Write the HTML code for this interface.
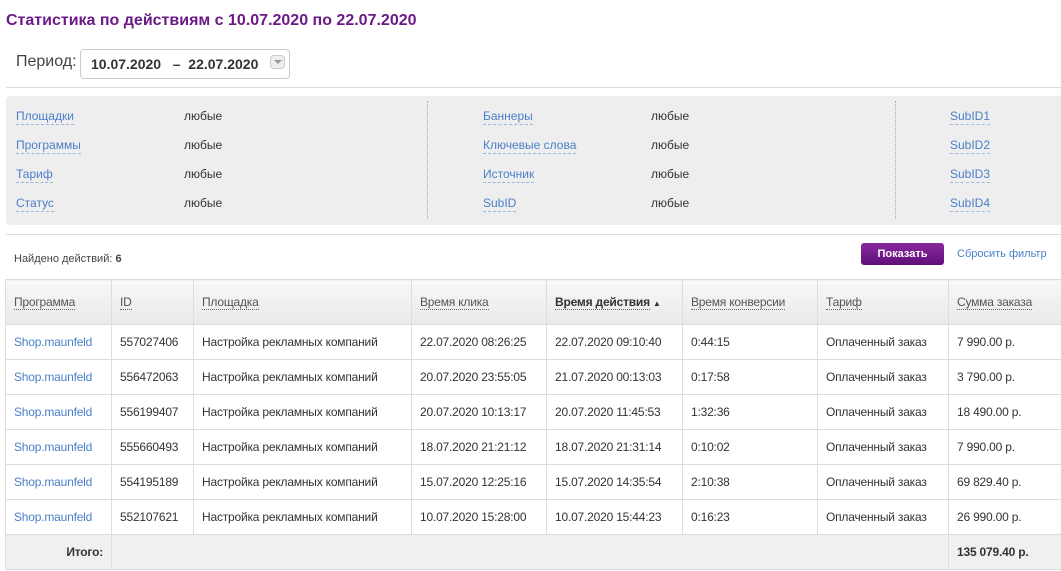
<!DOCTYPE html>
<html><head><meta charset="utf-8"><style>
*{margin:0;padding:0;box-sizing:border-box}
body{width:1061px;height:571px;overflow:hidden;background:#fff;font-family:"Liberation Sans",sans-serif;font-size:12px;color:#333;position:relative}
.a{position:absolute;white-space:nowrap}
.lk{color:#4a7fc8;border-bottom:1px dashed #9bb8e0;line-height:15px}
.v{color:#333}
table{position:absolute;left:5px;top:279px;width:1060px;border-collapse:collapse;table-layout:fixed}
td,th{border:1px solid #ddd;padding:0 8px;height:35px;text-align:left;white-space:nowrap;overflow:hidden;font-weight:normal;font-size:12px;letter-spacing:-0.2px}
th{height:45px;background:linear-gradient(#f8f8f8,#e9e9e9);color:#555}
th span{border-bottom:1px dotted #666}
td a{color:#4a7fc8;text-decoration:none}
tr.t td{background:#f0f0f0;font-weight:bold}
</style></head><body>
<div class="a" style="left:6px;top:12px;font-size:16px;font-weight:bold;color:#6c1a86">Статистика по действиям с 10.07.2020 по 22.07.2020</div>
<div class="a" style="left:16px;top:53px;font-size:16px;color:#444">Период:</div>
<div class="a" style="left:80px;top:49px;width:210px;height:30px;border:1px solid #ccc;border-radius:4px"></div>
<div class="a" style="left:91px;top:56px;font-size:14px;font-weight:bold;color:#333">10.07.2020 &nbsp;&nbsp;– &nbsp;22.07.2020</div>
<div class="a" style="left:270px;top:55px;width:15px;height:14px;border:1px solid #ccc;border-radius:4px;background:#eee"></div>
<div class="a" style="left:274px;top:60px;width:0;height:0;border-left:4px solid transparent;border-right:4px solid transparent;border-top:4px solid #999"></div>
<div class="a" style="left:6px;top:87px;width:1055px;border-top:1px solid #ddd"></div>
<div class="a" style="left:6px;top:96px;width:1055px;height:129px;background:#eee;border-radius:4px 0 0 4px"></div>
<div class="a" style="left:427px;top:101px;height:118px;border-left:1px dotted #aaa"></div>
<div class="a" style="left:895px;top:101px;height:118px;border-left:1px dotted #aaa"></div>
<div class="a lk" style="left:16px;top:109px">Площадки</div><div class="a v" style="left:184px;top:109px">любые</div>
<div class="a lk" style="left:16px;top:138px">Программы</div><div class="a v" style="left:184px;top:138px">любые</div>
<div class="a lk" style="left:16px;top:167px">Тариф</div><div class="a v" style="left:184px;top:167px">любые</div>
<div class="a lk" style="left:16px;top:196px">Статус</div><div class="a v" style="left:184px;top:196px">любые</div>
<div class="a lk" style="left:483px;top:109px">Баннеры</div><div class="a v" style="left:651px;top:109px">любые</div>
<div class="a lk" style="left:483px;top:138px">Ключевые слова</div><div class="a v" style="left:651px;top:138px">любые</div>
<div class="a lk" style="left:483px;top:167px">Источник</div><div class="a v" style="left:651px;top:167px">любые</div>
<div class="a lk" style="left:483px;top:196px">SubID</div><div class="a v" style="left:651px;top:196px">любые</div>
<div class="a lk" style="left:950px;top:109px">SubID1</div>
<div class="a lk" style="left:950px;top:138px">SubID2</div>
<div class="a lk" style="left:950px;top:167px">SubID3</div>
<div class="a lk" style="left:950px;top:196px">SubID4</div>
<div class="a" style="left:6px;top:234px;width:1055px;border-top:1px solid #ddd"></div>
<div class="a" style="left:14px;top:253px;font-size:11px;color:#444">Найдено действий: <b>6</b></div>
<div class="a" style="left:861px;top:243px;width:83px;height:22px;border-radius:3px;background:linear-gradient(#8a2aa0,#5e0f78);color:#fff;font-size:11px;font-weight:bold;text-align:center;line-height:22px">Показать</div>
<div class="a" style="left:957px;top:248px;font-size:11px;color:#4a7fc8">Сбросить фильтр</div>
<table>
<colgroup><col style="width:106px"><col style="width:82px"><col style="width:218px"><col style="width:135px"><col style="width:136px"><col style="width:135px"><col style="width:131px"><col style="width:117px"></colgroup>
<tr><th><span>Программа</span></th><th><span>ID</span></th><th><span>Площадка</span></th><th><span>Время клика</span></th><th style="font-weight:bold;color:#333"><span>Время действия</span> <span style="border:0;font-size:8px">▲</span></th><th><span>Время конверсии</span></th><th><span>Тариф</span></th><th><span>Сумма заказа</span></th></tr>
<tr><td><a>Shop.maunfeld</a></td><td>557027406</td><td>Настройка рекламных компаний</td><td>22.07.2020 08:26:25</td><td>22.07.2020 09:10:40</td><td>0:44:15</td><td>Оплаченный заказ</td><td>7 990.00 р.</td></tr>
<tr><td><a>Shop.maunfeld</a></td><td>556472063</td><td>Настройка рекламных компаний</td><td>20.07.2020 23:55:05</td><td>21.07.2020 00:13:03</td><td>0:17:58</td><td>Оплаченный заказ</td><td>3 790.00 р.</td></tr>
<tr><td><a>Shop.maunfeld</a></td><td>556199407</td><td>Настройка рекламных компаний</td><td>20.07.2020 10:13:17</td><td>20.07.2020 11:45:53</td><td>1:32:36</td><td>Оплаченный заказ</td><td>18 490.00 р.</td></tr>
<tr><td><a>Shop.maunfeld</a></td><td>555660493</td><td>Настройка рекламных компаний</td><td>18.07.2020 21:21:12</td><td>18.07.2020 21:31:14</td><td>0:10:02</td><td>Оплаченный заказ</td><td>7 990.00 р.</td></tr>
<tr><td><a>Shop.maunfeld</a></td><td>554195189</td><td>Настройка рекламных компаний</td><td>15.07.2020 12:25:16</td><td>15.07.2020 14:35:54</td><td>2:10:38</td><td>Оплаченный заказ</td><td>69 829.40 р.</td></tr>
<tr><td><a>Shop.maunfeld</a></td><td>552107621</td><td>Настройка рекламных компаний</td><td>10.07.2020 15:28:00</td><td>10.07.2020 15:44:23</td><td>0:16:23</td><td>Оплаченный заказ</td><td>26 990.00 р.</td></tr>
<tr class="t"><td style="text-align:right">Итого:</td><td colspan="6"></td><td>135 079.40 р.</td></tr>
</table>
</body></html>
